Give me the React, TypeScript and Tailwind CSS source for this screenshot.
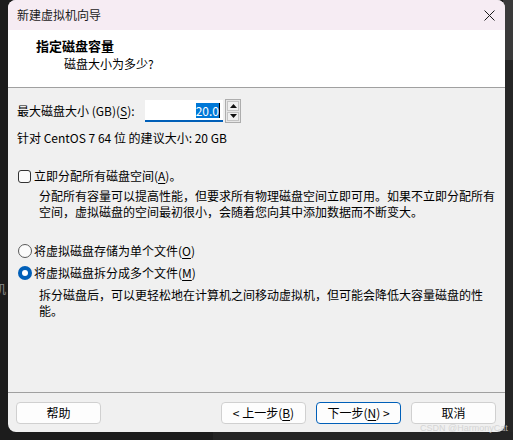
import React from "react";

const font = { fontFamily: '"Noto Sans CJK SC", "Microsoft YaHei", sans-serif' };

function U({ c }: { c: string }) {
  return <span className="underline underline-offset-2 decoration-1">{c}</span>;
}

function Btn({ children, primary }: { children: React.ReactNode; primary?: boolean }) {
  return (
    <div
      className={
        "w-[85px] h-[22px] rounded-[4px] bg-[#fdfdfd] flex items-center justify-center text-[12px] leading-none text-black border " +
        (primary ? "border-[#005fb8]" : "border-[#d0d0d0]")
      }
    >
      {children}
    </div>
  );
}

export default function App() {
  return (
    <div className="relative w-[513px] h-[440px] bg-[#1c1c1c] overflow-hidden" style={font}>
      {/* desktop background bits */}
      <div className="absolute right-0 top-0 w-[10px] h-[60px] bg-[#3a3a3a]" />
      <div className="absolute right-0 top-[60px] w-[10px] h-[380px] bg-[#262626]" />
      <div className="absolute left-[-6px] top-[281px] text-[12px] leading-[16px] text-[#8a8a8a]">机</div>
      <div className="absolute left-[213px] top-[432px] w-[300px] h-[8px] bg-[#242424]" />

      {/* window */}
      <div className="absolute left-[8px] top-0 w-[497px] h-[432px] rounded-[8px] overflow-hidden bg-[#f0f0f0] flex flex-col text-[12px] text-black">
        {/* title bar */}
        <div className="h-[30px] bg-[#f6ecf3] flex items-center justify-between pl-[9px] pr-[10px]">
          <span className="text-[12px] leading-[16px] text-[#1a1a1a]">新建虚拟机向导</span>
          <svg width="11" height="11" viewBox="0 0 11 11">
            <path d="M0.5 0.5 L10.5 10.5 M10.5 0.5 L0.5 10.5" stroke="#1a1a1a" strokeWidth="1" />
          </svg>
        </div>

        {/* header */}
        <div className="h-[58px] bg-white border-b border-[#a0a0a0] flex flex-col pt-[7px]">
          <div className="pl-[28px] text-[13px] leading-[18px] font-bold">指定磁盘容量</div>
          <div className="pl-[56px] mt-[1px] text-[12px] leading-[16px]">磁盘大小为多少?</div>
        </div>

        {/* body */}
        <div className="flex-1 flex flex-col pl-[9px]">
          <div className="mt-[11px] h-[24px] flex items-center">
            <div className="w-[128px] leading-[16px]">
              最大磁盘大小 (GB)(<U c="S" />):
            </div>
            <div className="w-[78px] h-[22px] bg-white border-b-2 border-[#005fb8] flex items-center justify-end pr-[3px]">
              <span className="bg-[#0078d7] text-white text-[12px] leading-[15px]">20.0</span>
              <span className="w-[1px] h-[15px] bg-black" />
            </div>
            <div className="ml-[2px] w-[16px] h-[24px] border border-[#adadad] bg-[#e6e6e6] flex flex-col p-[1px] gap-[1px]">
              <div className="flex-1 border border-[#c4c4c4] bg-[#f0f0f0] flex items-center justify-center">
                <svg width="7" height="4" viewBox="0 0 7 4">
                  <path d="M3.5 0 L7 4 L0 4 Z" fill="#111" />
                </svg>
              </div>
              <div className="flex-1 border border-[#c4c4c4] bg-[#f0f0f0] flex items-center justify-center">
                <svg width="7" height="4" viewBox="0 0 7 4">
                  <path d="M0 0 L7 0 L3.5 4 Z" fill="#111" />
                </svg>
              </div>
            </div>
          </div>

          <div className="mt-[7px] leading-[16px]">针对 CentOS 7 64 位 的建议大小: 20 GB</div>

          <div className="mt-[22px] flex items-center h-[16px]">
            <div className="ml-[1px] w-[13px] h-[13px] rounded-[3px] border border-[#333] bg-[#fbfbfb]" />
            <span className="ml-[3px] leading-[16px]">
              立即分配所有磁盘空间(<U c="A" />)。
            </span>
          </div>
          <div className="mt-[4px] ml-[22px] leading-[16px]">
            <div>分配所有容量可以提高性能，但要求所有物理磁盘空间立即可用。如果不立即分配所有</div>
            <div>空间，虚拟磁盘的空间最初很小，会随着您向其中添加数据而不断变大。</div>
          </div>

          <div className="mt-[23px] flex items-center h-[16px]">
            <div className="ml-[1px] w-[14px] h-[14px] rounded-full border border-[#5a5a5a] bg-[#fbfbfb]" />
            <span className="ml-[2px] leading-[16px]">
              将虚拟磁盘存储为单个文件(<U c="O" />)
            </span>
          </div>
          <div className="mt-[6px] flex items-center h-[16px]">
            <div className="ml-[1px] w-[14px] h-[14px] rounded-full bg-[#005fb8] flex items-center justify-center">
              <div className="w-[6px] h-[6px] rounded-full bg-white" />
            </div>
            <span className="ml-[2px] leading-[16px]">
              将虚拟磁盘拆分成多个文件(<U c="M" />)
            </span>
          </div>
          <div className="mt-[6px] ml-[22px] leading-[16px]">
            <div>拆分磁盘后，可以更轻松地在计算机之间移动虚拟机，但可能会降低大容量磁盘的性</div>
            <div>能。</div>
          </div>
        </div>

        {/* footer */}
        <div className="h-[40px] border-t border-[#a0a0a0] flex items-start pt-[9px] pl-[8px] pr-[9px]">
          <Btn>帮助</Btn>
          <div className="flex-1" />
          <div className="flex gap-[10px]">
            <Btn>
              &lt; 上一步(<U c="B" />)
            </Btn>
            <Btn primary>
              下一步(<U c="N" />) &gt;
            </Btn>
            <Btn>取消</Btn>
          </div>
        </div>
      </div>

      {/* watermark */}
      <div
        className="absolute left-[420px] top-[422px] whitespace-nowrap text-[9px] leading-[12px] text-[#cfcfcf] opacity-80"
        style={{ fontFamily: '"Liberation Sans", Arial, sans-serif' }}
      >
        CSDN @HarmonyCat
      </div>
    </div>
  );
}
